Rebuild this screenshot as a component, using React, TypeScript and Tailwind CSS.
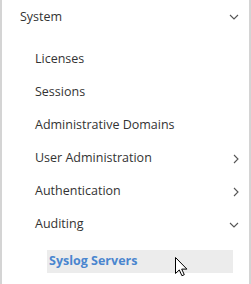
import React from 'react';

const Down = () => (
  <svg width="10" height="6" viewBox="0 0 10 6" fill="none" className="text-[#555]">
    <path d="M1 1l4 4 4-4" stroke="currentColor" strokeWidth="1.1" />
  </svg>
);

const Right = () => (
  <svg width="6" height="10" viewBox="0 0 6 10" fill="none" className="text-[#555]">
    <path d="M1 1l4 4-4 4" stroke="currentColor" strokeWidth="1.1" />
  </svg>
);

const items: { label: string; icon?: 'right' | 'down' }[] = [
  { label: 'Licenses' },
  { label: 'Sessions' },
  { label: 'Administrative Domains' },
  { label: 'User Administration', icon: 'right' },
  { label: 'Authentication', icon: 'right' },
  { label: 'Auditing', icon: 'down' },
];

export default function App() {
  return (
    <div className="w-[251px] h-[284px] bg-white border-l-2 border-r-2 border-[#d4d4d4] overflow-hidden text-[12.5px] text-[#333] font-['Open_Sans',sans-serif]">
      <div className="h-[34px] flex items-center justify-between pl-[18px] pr-[10px]">
        <span>System</span>
        <Down />
      </div>
      <div className="pt-[9px]">
        {items.map((it) => (
          <div key={it.label} className="h-[33px] flex items-center justify-between pl-[33px] pr-[10px]">
            <span>{it.label}</span>
            {it.icon === 'right' && <Right />}
            {it.icon === 'down' && <Down />}
          </div>
        ))}
        <div className="pt-[9px] pl-[45px] pr-[16px]">
          <div className="relative h-[23px] bg-[#ececec] flex items-center pl-[2px] font-bold text-[#4a86cf]">
            Syslog Servers
            <svg className="absolute left-[128px] top-[7px]" width="13" height="20" viewBox="0 0 13 20">
              <path d="M0.5 0.5v16l3.8-3.6 2.6 5.8 2.4-1-2.6-5.6h5.2z" fill="#fff" stroke="#000" strokeWidth="1" strokeLinejoin="miter" />
            </svg>
          </div>
        </div>
      </div>
    </div>
  );
}
